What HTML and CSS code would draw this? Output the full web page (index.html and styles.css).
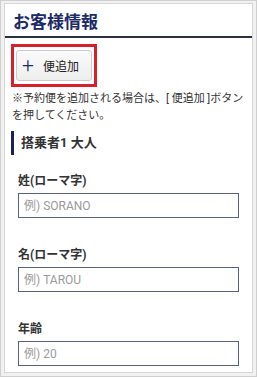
FILE: index.html
```html
<!DOCTYPE html>
<html lang="ja">
<head>
  <meta charset="UTF-8">
  <meta name="viewport" content="width=device-width, initial-scale=1.0">
  <title>お客様情報</title>
  <link rel="stylesheet" href="styles.css">
</head>
<body>
  <div class="panel">
    <h2 class="panel-title">お客様情報</h2>

    <div class="content">
      <div class="add-box">
        <button class="add-btn"><span class="plus">+</span>便追加</button>
      </div>
      <p class="note">※予約便を追加される場合は、[ 便追加 ]ボタンを押してください。</p>

      <h3 class="passenger">搭乗者1 大人</h3>

      <div class="field">
        <label>姓(ローマ字)</label>
        <input type="text" placeholder="例) SORANO">
      </div>
      <div class="field">
        <label>名(ローマ字)</label>
        <input type="text" placeholder="例) TAROU">
      </div>
      <div class="field">
        <label>年齢</label>
        <input type="text" placeholder="例) 20">
      </div>
    </div>
  </div>
</body>
</html>
```

FILE: styles.css
```css
html {
  height: 100%;
}
body {
  margin: 0;
  height: 100%;
  box-sizing: border-box;
  font-family: Roboto, 'Noto Sans CJK JP', sans-serif;
  background: #f1f1f1;
  border: 1px solid #cfcfcf;
  padding: 2px 3px 3px 3px;
  display: flex;
  flex-direction: column;
  color: #333;
  overflow: hidden;
}
.panel {
  flex: 1;
  background: #fff;
  border: 1px solid #d6d6d6;
}
.panel-title {
  margin: 0;
  padding: 6px 8px 2px;
  line-height: 24px;
  font-size: 17px;
  font-weight: bold;
  color: #1d2a6a;
  border-bottom: 2px solid #2a3242;
}
.content {
  padding: 6px 7px 0 6px;
}
.add-box {
  display: inline-block;
  border: 3px solid #d7202c;
  padding: 3px 2px;
}
.add-btn {
  display: flex;
  align-items: center;
  width: 76px;
  height: 31px;
  padding: 0 0 0 5px;
  font-family: inherit;
  font-size: 12px;
  color: #222;
  background: linear-gradient(#fafafa, #eeeeee);
  border: 1px solid #cccccc;
  border-radius: 3px;
}
.plus {
  font-size: 21px;
  font-weight: 300;
  color: #1d2a6a;
  margin-right: 9px;
  line-height: 1;
}
.note {
  margin: 3px 0 0 1px;
  font-size: 11px;
  line-height: 17px;
  color: #333;
}
.passenger {
  margin: 7px 0 0 0;
  border-left: 3px solid #1b1f5c;
  padding-left: 7px;
  font-size: 13px;
  line-height: 24px;
  color: #333;
}
.field {
  margin: 17px 6px 0 7px;
}
.field + .field {
  margin-top: 28px;
}
.field label {
  display: block;
  font-size: 12px;
  font-weight: bold;
  line-height: 18px;
  margin-bottom: 3px;
}
.field input {
  display: block;
  width: 100%;
  height: 25px;
  box-sizing: border-box;
  border: 1px solid #56627f;
  padding: 0 5px;
  font-family: inherit;
  font-size: 12px;
}
.field input::placeholder {
  color: #9a9a9a;
}
```
